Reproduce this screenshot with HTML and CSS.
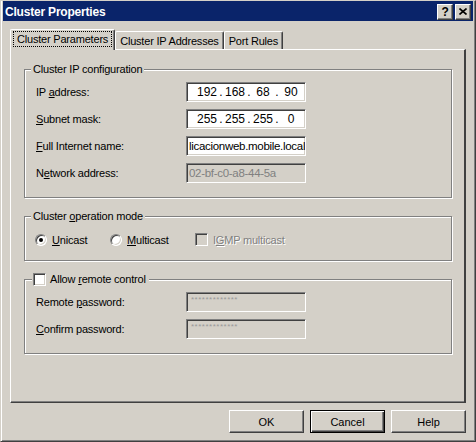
FILE: index.html
```html
<!DOCTYPE html>
<html lang="en">
<head>
    <meta charset="UTF-8">
    <title>Cluster Properties</title>
    <link rel="stylesheet" href="styles.css">
</head>
<body>
    <div class="window">
        <div class="titlebar">
            <span class="title">Cluster Properties</span>
            <div class="caption-buttons">
                <div class="cap-btn help">?</div>
                <div class="cap-btn">
                    <svg width="8" height="7" viewBox="0 0 8 7">
                        <path d="M0.5 0.5 L7.5 6.5 M7.5 0.5 L0.5 6.5" stroke="#000" stroke-width="1.6"/>
                    </svg>
                </div>
            </div>
        </div>

        <div class="content">
            <!-- tabs -->
            <div class="tabs">
                <div class="tab active"><span class="focus">Cluster Parameters</span></div>
                <div class="tab">Cluster IP Addresses</div>
                <div class="tab">Port Rules</div>
            </div>

            <div class="panel">
                <fieldset class="group">
                    <legend>Cluster IP configuration</legend>
                    <div class="row">
                        <label>IP <u>a</u>ddress:</label>
                        <div class="field ip">
                            <span>192</span><i>.</i><span>168</span><i>.</i><span>68</span><i>.</i><span>90</span>
                        </div>
                    </div>
                    <div class="row">
                        <label><u>S</u>ubnet mask:</label>
                        <div class="field ip">
                            <span>255</span><i>.</i><span>255</span><i>.</i><span>255</span><i>.</i><span>0</span>
                        </div>
                    </div>
                    <div class="row">
                        <label><u>F</u>ull Internet name:</label>
                        <div class="field text">licacionweb.mobile.local</div>
                    </div>
                    <div class="row">
                        <label>N<u>e</u>twork address:</label>
                        <div class="field text disabled">02-bf-c0-a8-44-5a</div>
                    </div>
                </fieldset>

                <fieldset class="group">
                    <legend>Cluster <u>o</u>peration mode</legend>
                    <div class="options">
                        <label class="option"><span class="radio checked"></span><span><u>U</u>nicast</span></label>
                        <label class="option"><span class="radio"></span><span><u>M</u>ulticast</span></label>
                        <label class="option"><span class="check off"></span><span class="dim">I<u>G</u>MP multicast</span></label>
                    </div>
                </fieldset>

                <fieldset class="group">
                    <legend class="option"><span class="check"></span><span>Allow <u>r</u>emote control</span></legend>
                    <div class="row">
                        <label>Remote <u>p</u>assword:</label>
                        <div class="field password">*************</div>
                    </div>
                    <div class="row">
                        <label><u>C</u>onfirm password:</label>
                        <div class="field password">*************</div>
                    </div>
                </fieldset>
            </div>

            <!-- dialog buttons -->
            <div class="actions">
                <button type="button">OK</button>
                <button type="button" class="default">Cancel</button>
                <button type="button">Help</button>
            </div>
        </div>
    </div>
</body>
</html>
```

FILE: styles.css
```css
* {
    box-sizing: border-box;
}

body {
    margin: 0;
    font-family: 'Liberation Sans', Arial, sans-serif;
    font-size: 11px;
    letter-spacing: -0.2px;
    color: #000000;
    background-color: #d4d0c8;
}

u {
    text-decoration: underline;
    text-underline-offset: 1px;
}

.window {
    width: 476px;
    height: 442px;
    padding: 0 2px 2px 2px;
    background-color: #d4d0c8;
    border: 1px solid;
    border-color: #d4d0c8 #404040 #404040 #d4d0c8;
    box-shadow: inset 1px 0 #ffffff, inset -1px -1px #808080;
    display: flex;
    flex-direction: column;
}

/* title bar */
.titlebar {
    height: 20px;
    background-color: #0a246a;
    color: #ffffff;
    display: flex;
    align-items: center;
    justify-content: space-between;
    padding: 1px 2px 0 2px;
}

.title {
    font-weight: bold;
    font-size: 12px;
}

.caption-buttons {
    display: flex;
    gap: 2px;
}

.cap-btn {
    width: 16px;
    height: 16px;
    background-color: #d4d0c8;
    border: 1px solid;
    border-color: #ffffff #404040 #404040 #ffffff;
    box-shadow: inset -1px -1px #808080;
    color: #000000;
    display: flex;
    align-items: center;
    justify-content: center;
}

.cap-btn.help {
    font-weight: bold;
    font-size: 12px;
    line-height: 1;
}

.content {
    flex: 1;
    padding: 8px 7px 0 7px;
    display: flex;
    flex-direction: column;
}

/* tabs */
.tabs {
    display: flex;
    align-items: flex-end;
    height: 21px;
    margin-bottom: -1px;
    position: relative;
    z-index: 1;
}

.tab {
    height: 18px;
    margin-bottom: 1px;
    padding: 0 4px 0 4px;
    display: flex;
    align-items: center;
    background-color: #d4d0c8;
    border-top: 1px solid #ffffff;
    border-left: 1px solid #ffffff;
    border-right: 1px solid #404040;
    border-radius: 2px 2px 0 0;
    box-shadow: inset -1px 0 #808080;
}

.tab.active {
    height: 21px;
    margin-bottom: 0;
    padding: 0 2px 2px 2px;
}

.focus {
    border: 1px dotted #000000;
    padding: 1px 3px 1px 3px;
}

.panel {
    height: 354px;
    padding: 13px 12px 0 13px;
    border: 1px solid;
    border-color: #ffffff #404040 #404040 #ffffff;
    border-right-width: 2px;
    box-shadow: inset 0 -1px #808080;
    display: flex;
    flex-direction: column;
}

/* group boxes */
.group {
    margin: 0;
    padding: 6px 10px 14px 11px;
    border: 1px solid #808080;
    box-shadow: 1px 1px #ffffff, inset 1px 1px #ffffff;
    display: flex;
    flex-direction: column;
    gap: 7px;
}

.group + .group {
    margin-top: 12px;
}

.group legend {
    margin-left: -5px;
    padding: 0 2px;
    line-height: 13px;
    background-color: #d4d0c8;
}

.row {
    display: flex;
    align-items: center;
    height: 20px;
}

.row label {
    width: 150px;
}

.field {
    width: 120px;
    height: 20px;
    background-color: #ffffff;
    border: 1px solid;
    border-color: #808080 #ffffff #ffffff #808080;
    box-shadow: inset 1px 1px #404040, inset -1px -1px #d4d0c8;
    display: flex;
    align-items: center;
    overflow: hidden;
    white-space: nowrap;
}

.field.ip {
    padding-left: 8px;
    font-size: 12px;
    letter-spacing: 0;
}

.field.ip span {
    width: 24px;
    text-align: center;
}

.field.ip i {
    font-style: normal;
    width: 4px;
    text-align: center;
}

.field.text {
    padding-left: 2px;
    font-size: 11.5px;
    letter-spacing: -0.3px;
}

.field.disabled {
    background-color: #d4d0c8;
    color: #808080;
}

.field.password {
    background-color: #d4d0c8;
    color: #9a9a9a;
    font-size: 8px;
    letter-spacing: 0.5px;
    line-height: 8px;
    align-items: flex-start;
    padding: 3px 0 0 4px;
}

/* radios and checkboxes */
.options {
    display: grid;
    grid-template-columns: 75px 85px auto;
    height: 13px;
    margin-top: 4px;
    margin-left: -1px;
}

.option {
    display: flex;
    align-items: center;
    gap: 5px;
}

.radio {
    width: 12px;
    height: 12px;
    border-radius: 50%;
    background-color: #ffffff;
    border: 1px solid;
    border-color: #808080 #ffffff #ffffff #808080;
    box-shadow: inset 1px 1px #404040, inset -1px -1px #d4d0c8;
    display: flex;
    align-items: center;
    justify-content: center;
}

.radio.checked::after {
    content: '';
    width: 4px;
    height: 4px;
    border-radius: 50%;
    background-color: #000000;
}

.check {
    width: 13px;
    height: 13px;
    background-color: #ffffff;
    border: 1px solid;
    border-color: #808080 #ffffff #ffffff #808080;
    box-shadow: inset 1px 1px #404040, inset -1px -1px #d4d0c8;
}

.check.off {
    background-color: #d4d0c8;
}

.dim {
    color: #808080;
    text-shadow: 1px 1px #ffffff;
}

.group legend.option {
    display: flex;
    gap: 4px;
    margin-left: -4px;
    padding: 0 3px 0 1px;
}

/* dialog buttons */
.actions {
    display: flex;
    justify-content: flex-end;
    gap: 6px;
    margin-top: 7px;
}

button {
    width: 75px;
    height: 23px;
    font-family: inherit;
    font-size: 11px;
    color: #000000;
    background-color: #d4d0c8;
    border: 1px solid;
    border-color: #ffffff #404040 #404040 #ffffff;
    box-shadow: inset -1px -1px #808080;
    padding: 0;
}

button.default {
    border-color: #000000;
    box-shadow: inset 1px 1px #ffffff, inset -1px -1px #404040, inset -2px -2px #808080;
}
```
